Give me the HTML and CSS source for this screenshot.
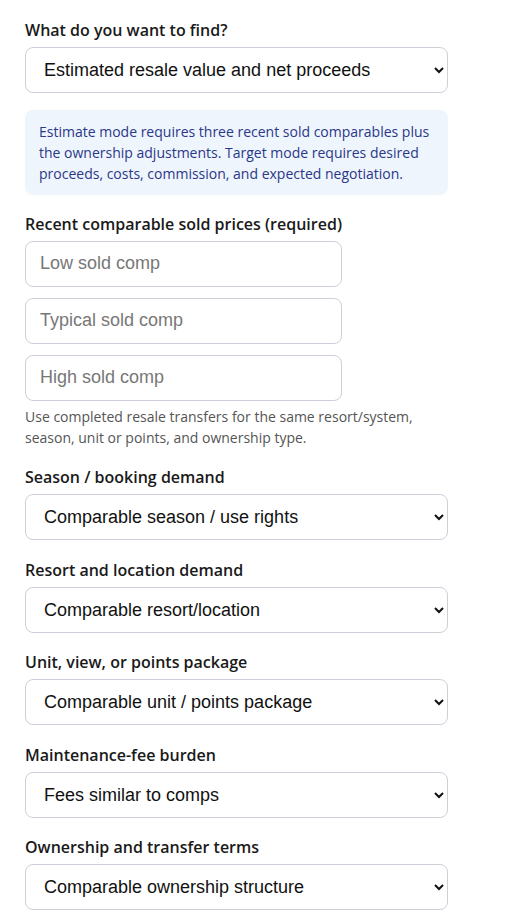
FILE: index.html
```
<!DOCTYPE html>
<html lang="en">
<head>
    <meta charset="UTF-8">
    <meta name="viewport" content="width=device-width, initial-scale=1.0">
    <title>Timeshare Resale Calculator</title>
    <link rel="stylesheet" href="styles.css">
</head>
<body>
    <form class="calc-form">
        <div class="field">
            <label for="mode">What do you want to find?</label>
            <select id="mode">
                <option>Estimated resale value and net proceeds</option>
                <option>Target listing price</option>
            </select>
        </div>

        <div class="note">
            Estimate mode requires three recent sold comparables plus the ownership adjustments. Target mode requires desired proceeds, costs, commission, and expected negotiation.
        </div>

        <div class="field">
            <label>Recent comparable sold prices (required)</label>
            <div class="comp-list">
                <input type="text" placeholder="Low sold comp">
                <input type="text" placeholder="Typical sold comp">
                <input type="text" placeholder="High sold comp">
            </div>
            <p class="hint">Use completed resale transfers for the same resort/system, season, unit or points, and ownership type.</p>
        </div>

        <div class="field">
            <label for="season">Season / booking demand</label>
            <select id="season">
                <option>Comparable season / use rights</option>
            </select>
        </div>

        <div class="field">
            <label for="resort">Resort and location demand</label>
            <select id="resort">
                <option>Comparable resort/location</option>
            </select>
        </div>

        <div class="field">
            <label for="unit">Unit, view, or points package</label>
            <select id="unit">
                <option>Comparable unit / points package</option>
            </select>
        </div>

        <div class="field">
            <label for="fees">Maintenance-fee burden</label>
            <select id="fees">
                <option>Fees similar to comps</option>
            </select>
        </div>

        <div class="field">
            <label for="terms">Ownership and transfer terms</label>
            <select id="terms">
                <option>Comparable ownership structure</option>
            </select>
        </div>
    </form>
</body>
</html>
```

FILE: styles.css
```
* {
    box-sizing: border-box;
    margin: 0;
    padding: 0;
}

body {
    font-family: 'Open Sans', 'Noto Sans', sans-serif;
    background-color: #ffffff;
    color: #1a1a1a;
}

.calc-form {
    width: 423px;
    margin: 19px 0 0 25px;
}

.field {
    margin-bottom: 18.5px;
}

.field label {
    display: block;
    font-size: 16px;
    font-weight: 600;
    line-height: 22px;
    margin-bottom: 6px;
}

select,
input[type="text"] {
    display: block;
    height: 46px;
    font-family: 'Liberation Sans', Arial, sans-serif;
    font-size: 18px;
    color: #111;
    background-color: #fff;
    border: 1px solid #cdd0d8;
    border-radius: 8px;
    padding: 0 14px;
}

select {
    width: 100%;
}

.comp-list {
    display: flex;
    flex-direction: column;
    gap: 11px;
}

input[type="text"] {
    width: 317px;
}

input::placeholder {
    color: #777;
}

.note {
    background-color: #eef5fd;
    color: #2b3788;
    border-radius: 8px;
    padding: 11px 14px;
    font-size: 14px;
    line-height: 21px;
    margin: -2px 0 18px;
}

.hint {
    font-size: 14px;
    line-height: 21px;
    color: #555;
    margin-top: 5px;
}
```
